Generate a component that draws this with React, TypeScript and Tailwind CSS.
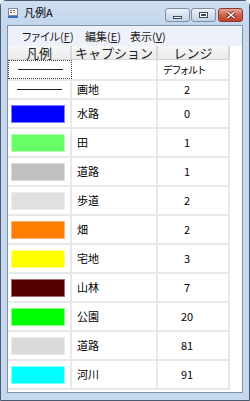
import React from "react";

type Row = {
  color: string;
  edge: string;
  caption: string;
  range: string;
};

const rows: Row[] = [
  { color: "bg-[#0000ff]", edge: "border-[#8080ff]", caption: "水路", range: "0" },
  { color: "bg-[#66ff66]", edge: "border-[#b3ffb3]", caption: "田", range: "1" },
  { color: "bg-[#c0c0c0]", edge: "border-[#dcdcdc]", caption: "道路", range: "1" },
  { color: "bg-[#e0e0e0]", edge: "border-[#ececec]", caption: "歩道", range: "2" },
  { color: "bg-[#ff8000]", edge: "border-[#ffb070]", caption: "畑", range: "2" },
  { color: "bg-[#ffff00]", edge: "border-[#ffff80]", caption: "宅地", range: "3" },
  { color: "bg-[#550000]", edge: "border-[#a07070]", caption: "山林", range: "7" },
  { color: "bg-[#00ff00]", edge: "border-[#80ff80]", caption: "公園", range: "20" },
  { color: "bg-[#dadada]", edge: "border-[#e8e8e8]", caption: "道路", range: "81" },
  { color: "bg-[#00ffff]", edge: "border-[#80ffff]", caption: "河川", range: "91" },
];

function AppIcon() {
  return (
    <svg width="10" height="10" viewBox="0 0 10 10">
      <rect x="0.5" y="0.5" width="9" height="7" fill="#ffffff" stroke="#7a8aa0" />
      <rect x="2" y="2" width="2" height="1" fill="#e03030" />
      <rect x="5" y="2" width="2" height="1" fill="#30a030" />
      <rect x="2" y="4" width="2" height="1" fill="#3050e0" />
      <rect x="5" y="4" width="2" height="1" fill="#e0a020" />
      <rect x="0" y="8" width="10" height="2" fill="#3a6fc0" />
    </svg>
  );
}

function CaptionButton({ kind }: { kind: "min" | "max" | "close" }) {
  const base =
    "w-[25px] h-[14px] rounded-[3px] border flex items-center justify-center";
  if (kind === "close") {
    return (
      <div
        className={`${base} border-[#8a3a30] bg-gradient-to-b from-[#e8a597] via-[#d2604c] to-[#c4402c]`}
      >
        <svg width="10" height="8" viewBox="0 0 10 8">
          <path d="M1.5 1 L8.5 7 M8.5 1 L1.5 7" stroke="#5a1a10" strokeWidth="3" />
          <path d="M1.5 1 L8.5 7 M8.5 1 L1.5 7" stroke="#ffffff" strokeWidth="1.6" />
        </svg>
      </div>
    );
  }
  return (
    <div
      className={`${base} border-[#7d8ea6] bg-gradient-to-b from-[#eef3fa] via-[#d6e1ef] to-[#c3d2e6]`}
    >
      {kind === "min" ? (
        <div className="w-[9px] h-[3px] mt-[5px] bg-white border border-[#3c4a5e]" />
      ) : (
        <div className="w-[9px] h-[6px] bg-white border border-[#3c4a5e] flex items-center justify-center">
          <div className="w-[5px] h-[2px] border border-[#3c4a5e]" />
        </div>
      )}
    </div>
  );
}

export default function App() {
  const jp = "font-['Noto_Sans_CJK_JP',sans-serif]";
  return (
    <div
      className={`w-[250px] h-[401px] bg-[#c5d8ee] border border-[#4b5a70] rounded-t-[6px] flex flex-col text-black ${jp}`}
    >
      {/* title bar */}
      <div className="h-[24px] flex items-start pl-[7px] pr-[6px] bg-gradient-to-b from-[#cfdff2] to-[#c3d6ec]">
        <div className="mt-[7px]">
          <AppIcon />
        </div>
        <span className="ml-[6px] mt-[4px] text-[11px] leading-[14px] [font-feature-settings:'palt']">
          凡例A
        </span>
        <div className="ml-auto mt-[7px] flex gap-[1px]">
          <CaptionButton kind="min" />
          <CaptionButton kind="max" />
          <div className="ml-[1px]">
            <CaptionButton kind="close" />
          </div>
        </div>
      </div>

      {/* client */}
      <div className="flex-1 mx-[6px] mb-[7px] border border-[#8193ab] bg-white flex flex-col">
        {/* menu bar */}
        <div className="h-[20px] bg-[#eef1fa] flex items-center text-[11px] leading-none pl-[14px] [font-feature-settings:'palt'] text-[#1a1a1a]">
          <span className="w-[63px]">
            ファイル(<span className="underline">F</span>)
          </span>
          <span className="w-[45px]">
            編集(<span className="underline">E</span>)
          </span>
          <span>
            表示(<span className="underline">V</span>)
          </span>
        </div>

        {/* grid */}
        <div className="w-[222px]">
          <div className="h-[14px] flex text-[13px] leading-[14px] text-[#222] bg-gradient-to-b from-[#f7f7f7] to-[#ebebeb] border-b border-[#d5d5d5]">
            <div className="w-[64px] h-[14px] text-center border-r-2 border-[#d8d8d8]">凡例</div>
            <div className="w-[86px] h-[14px] text-center border-r-2 border-[#d8d8d8]">キャプション</div>
            <div className="w-[72px] h-[14px] text-center border-r-2 border-[#d8d8d8]">レンジ</div>
          </div>

          <div className="text-[11px] [font-feature-settings:'palt']">
            <div className="h-[21px] flex border-b-2 border-[#e8e8e8]">
              <div className="w-[64px] border border-dotted border-[#444] flex items-center justify-center">
                <div className="w-[45px] h-[1px] bg-[#222]" />
              </div>
              <div className="w-[86px] border-r-2 border-[#e8e8e8]" />
              <div className="w-[72px] border-r-2 border-[#e8e8e8] flex items-center pl-[5px] text-[10px]">
                デフォルト
              </div>
            </div>
            <div className="h-[19px] flex border-b-2 border-[#e8e8e8]">
              <div className="w-[64px] border-r-2 border-[#e8e8e8] flex items-center justify-center">
                <div className="w-[45px] h-[1px] bg-[#222]" />
              </div>
              <div className="w-[86px] border-r-2 border-[#e8e8e8] flex items-center pl-[5px]">
                画地
              </div>
              <div className="w-[72px] border-r-2 border-[#e8e8e8] flex items-center justify-center pr-[12px]">
                2
              </div>
            </div>
            {rows.map((r, i) => (
              <div key={i} className="h-[29px] flex border-b-2 border-[#e8e8e8]">
                <div className="w-[64px] border-r-2 border-[#e8e8e8] flex items-center justify-center pr-[2px]">
                  <div className={`w-[54px] h-[18px] border ${r.color} ${r.edge}`} />
                </div>
                <div className="w-[86px] border-r-2 border-[#e8e8e8] flex items-center pl-[5px]">
                  {r.caption}
                </div>
                <div className="w-[72px] border-r-2 border-[#e8e8e8] flex items-center justify-center pr-[12px]">
                  {r.range}
                </div>
              </div>
            ))}
          </div>
        </div>
      </div>
    </div>
  );
}
